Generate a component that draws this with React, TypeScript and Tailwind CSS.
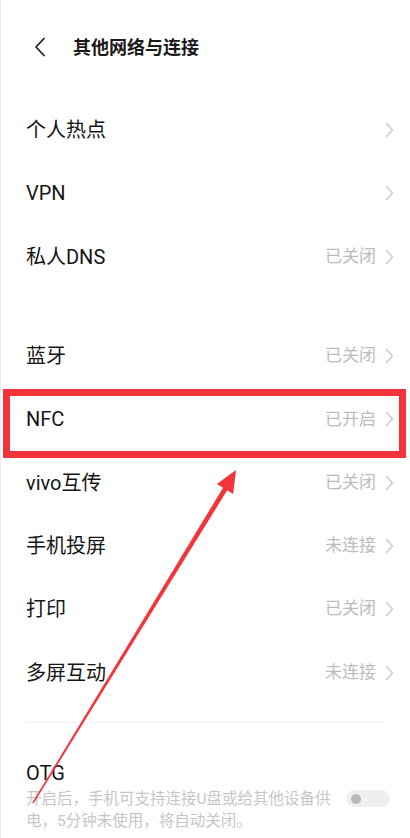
import React from 'react';

const rowsTop = [
  { label: '个人热点', value: '' },
  { label: 'VPN', value: '' },
  { label: '私人DNS', value: '已关闭' },
];

const rowsBottom = [
  { label: '蓝牙', value: '已关闭' },
  { label: 'NFC', value: '已开启' },
  { label: 'vivo互传', value: '已关闭' },
  { label: '手机投屏', value: '未连接' },
  { label: '打印', value: '已关闭' },
  { label: '多屏互动', value: '未连接' },
];

const Chevron = () => (
  <svg width="9" height="16" viewBox="0 0 9 16" fill="none" className="ml-[9px]">
    <path d="M1.5 1.5 L7.5 8 L1.5 14.5" stroke="#c9c9c9" strokeWidth="1.4" strokeLinecap="round" strokeLinejoin="round" />
  </svg>
);

const Row = ({ label, value }: { label: string; value: string }) => (
  <div className="flex h-[63.3px] items-center justify-between pl-[25px] pr-[16px]">
    <span className="text-[20px] text-[#151515]">{label}</span>
    <div className="flex items-center">
      {value && <span className="text-[17px] text-[#bcbcbc]">{value}</span>}
      <Chevron />
    </div>
  </div>
);

export default function App() {
  return (
    <div
      className="relative h-[838px] w-[410px] overflow-hidden border-l border-[#ececec] bg-white"
      style={{ fontFamily: 'Roboto, "Noto Sans CJK SC", sans-serif' }}
    >
      <header className="flex h-[94px] items-center pl-[33px]">
        <svg width="12" height="20" viewBox="0 0 12 20" fill="none">
          <path d="M10 1.5 L2 10 L10 18.5" stroke="#222" strokeWidth="1.8" strokeLinecap="round" strokeLinejoin="round" />
        </svg>
        <h1 className="ml-[27px] text-[18px] font-bold text-[#1a1a1a]">其他网络与连接</h1>
      </header>

      <div className="pt-[4.5px]">
        {rowsTop.map((r) => (
          <Row key={r.label} {...r} />
        ))}
      </div>

      <div className="pt-[36px]">
        {rowsBottom.map((r) => (
          <Row key={r.label} {...r} />
        ))}
      </div>

      <div className="mx-[25px] mt-[18px] h-px bg-[#f2f2f2]" />

      <div className="flex items-center justify-between pl-[25px] pr-[20px] pt-[38px]">
        <div>
          <div className="text-[20px] leading-[24px] text-[#151515]">OTG</div>
          <p className="mt-[3px] w-[310px] text-[15.5px] leading-[22px] text-[#c6c6c6]">
            开启后，手机可支持连接U盘或给其他设备供电，5分钟未使用，将自动关闭。
          </p>
        </div>
        <div className="mt-[4px] flex h-[17px] w-[44px] items-center rounded-full bg-[#efefef] pl-[5px]">
          <div className="h-[10px] w-[10px] rounded-full bg-[#b8b8b8]" />
        </div>
      </div>

      {/* annotation overlay */}
      <div className="absolute left-[2px] top-[389px] h-[69px] w-[403px] border-[7px] border-[#f3343b]" />
      <svg className="absolute left-0 top-0" width="410" height="838" viewBox="0 0 410 838">
        <polygon points="31.4,802.6 32.6,803.4 228.1,487.3 223.9,484.7" fill="#f3343b" />
        <polygon points="235,470 215.8,484 232.2,494" fill="#f3343b" />
      </svg>
    </div>
  );
}
